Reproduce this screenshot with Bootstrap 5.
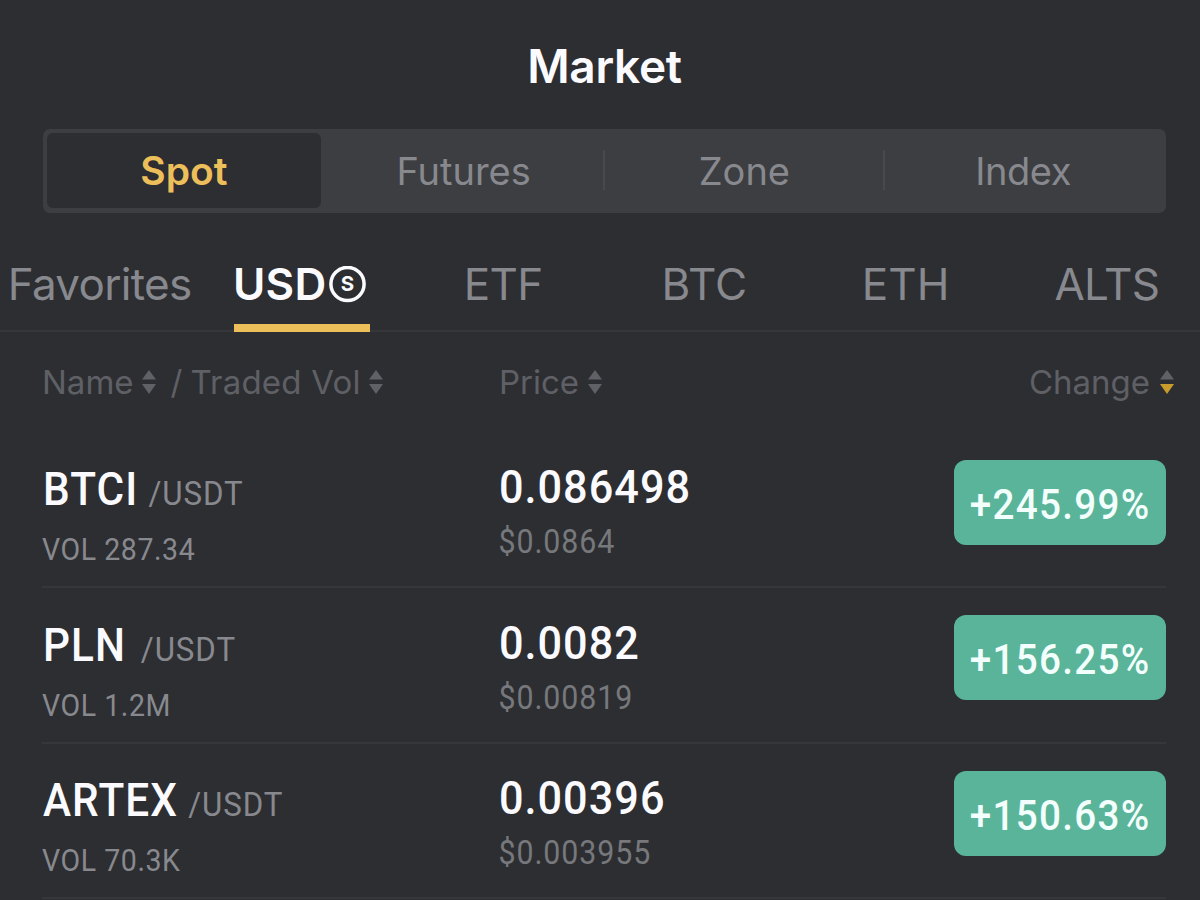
<!DOCTYPE html>
<html lang="en">
<head>
<meta charset="utf-8">
<meta name="viewport" content="width=device-width, initial-scale=1">
<title>Market</title>
<link href="https://cdn.jsdelivr.net/npm/bootstrap@5.3.0/dist/css/bootstrap.min.css" rel="stylesheet">
<style>
:root{--ink:#2d2e32;--panel:#3d3e42;--rule:#36373b;--muted:#88898e;--dim:#5f6065;--gold:#edbf5b;--up:#5ab499}
body{background:var(--ink);color:var(--muted);font-family:Inter,"Liberation Sans",sans-serif;width:1200px;height:900px}
.page-title{font-size:46px;font-weight:600;line-height:48px;letter-spacing:-.3px;color:#fbfbff;padding:42px 0 38.5px 9px}
.segments{margin:0 34px 0 43px;height:84.5px;border-radius:7px;background:var(--panel);font-size:38px}
.segments .nav-item .nav-link{position:relative;width:auto;color:var(--muted);line-height:77px;height:75px;border-radius:6px;margin:4.5px 4px 5px 3px}
.segments .nav-item .nav-link.active{background:var(--ink);color:var(--gold);font-weight:600;font-size:39px;line-height:76px;margin:4.5px 3px 5px 4px}
.segments .divided::after{content:"";position:absolute;right:-4px;top:17px;width:2px;height:40px;background:#48494d}
.coins{margin-top:31px;height:88px;border-bottom:2px solid var(--rule);font-size:44px;line-height:81px;flex-wrap:nowrap}
.coins .nav-item{flex:0 0 201.25px;height:88px}
.coins .nav-link{color:var(--muted)}
.coins .nav-link.active{width:136px;height:88px;border-bottom:8px solid var(--gold);color:#fbfbff;font-weight:600;letter-spacing:.3px}
.tight{letter-spacing:-.7px}
.snug{letter-spacing:-.4px}
.heads{height:100.5px;font-size:33px;line-height:100px;color:var(--dim)}
.first{width:456px;flex:none}
.sorter{width:14px;height:24px;fill:#606166;margin-left:10px}
.pair{margin:0 34px 0 42px;height:155.5px;border-bottom:2px solid var(--rule);font-family:Roboto,"Liberation Sans",sans-serif;white-space:nowrap}
.narrow{transform:scaleX(.92);transform-origin:0 50%}
.symbol{font-size:46px;font-weight:500;line-height:60px;letter-spacing:1.2px;color:#fbfbff;padding:26.5px 0 0 1px}
.quote{font-size:34px;font-weight:400;letter-spacing:1px;color:var(--muted);margin-left:11px}
.vol{font-size:31px;line-height:53px;letter-spacing:.6px}
.price{font-size:47px;font-weight:500;line-height:60px;letter-spacing:1.1px;color:#fbfbff;padding:24.5px 0 0 1px}
.fiat{font-size:33px;line-height:50px;letter-spacing:1px;color:#77787c;padding-left:.5px}
.change{width:212px;height:85px;margin-top:27px;border-radius:12px;background:var(--up);color:#f3fffc;font-size:42px;font-weight:500;line-height:90px;letter-spacing:1.4px}
.change .narrow{transform-origin:50% 50%;margin:0 -10px}
</style>
</head>
<body class="overflow-hidden">
<header class="text-center"><h1 class="page-title mb-0">Market</h1></header>

<ul class="nav nav-fill segments">
  <li class="nav-item w-25"><a class="nav-link active p-0">Spot</a></li>
  <li class="nav-item w-25"><a class="nav-link divided p-0">Futures</a></li>
  <li class="nav-item w-25"><a class="nav-link divided p-0">Zone</a></li>
  <li class="nav-item w-25"><a class="nav-link p-0 pe-1 snug">Index</a></li>
</ul>

<ul class="nav coins text-center">
  <li class="nav-item"><a class="nav-link p-0 tight" style="padding-right:2px!important">Favorites</a></li>
  <li class="nav-item d-flex justify-content-center"><a class="nav-link active d-flex align-items-center p-0"><span style="margin-left:-1px">USD</span><svg style="margin-left:2px" width="37" height="37" viewBox="0 0 37 37"><circle cx="18.5" cy="18" r="16.6" fill="none" stroke="#fbfbff" stroke-width="3.5"/><text x="18.5" y="25.2" text-anchor="middle" font-size="20.5" font-weight="700" letter-spacing="0" fill="#fbfbff">S</text></svg></a></li>
  <li class="nav-item"><a class="nav-link p-0 tight">ETF</a></li>
  <li class="nav-item"><a class="nav-link p-0">BTC</a></li>
  <li class="nav-item"><a class="nav-link p-0">ETH</a></li>
  <li class="nav-item"><a class="nav-link p-0 tight">ALTS</a></li>
</ul>

<svg class="d-none"><symbol id="up" viewBox="0 0 14 24"><path d="M7 0l7 9.5H0z"/></symbol><symbol id="down" viewBox="0 0 14 24"><path d="M0 14h14l-7 10z"/></symbol></svg>

<div class="heads d-flex">
  <div class="first d-flex align-items-center" style="margin-left:42px"><span>Name</span><svg class="sorter" style="margin-left:8px"><use href="#up"/><use href="#down"/></svg><span style="margin-left:15px">/</span><span style="margin-left:8px;letter-spacing:.2px">Traded Vol</span><svg class="sorter" style="margin-left:8px"><use href="#up"/><use href="#down"/></svg></div>
  <div class="d-flex align-items-center"><span style="margin-left:1px">Price</span><svg class="sorter" style="margin-left:9px"><use href="#up"/><use href="#down"/></svg></div>
  <div class="ms-auto d-flex align-items-center" style="margin-right:26px"><span>Change</span><svg class="sorter"><use href="#up"/><use href="#down" fill="#c99b2c"/></svg></div>
</div>

<main>
  <section class="pair d-flex">
    <div class="first"><div class="symbol narrow">BTCI<span class="quote">/USDT</span></div><div class="vol narrow">VOL 287.34</div></div>
    <div><div class="price narrow">0.086498</div><div class="fiat narrow">$0.0864</div></div>
    <div class="change ms-auto text-center"><span class="narrow d-inline-block">+245.99%</span></div>
  </section>
  <section class="pair d-flex">
    <div class="first"><div class="symbol narrow">PLN<span class="quote ms-3">/USDT</span></div><div class="vol narrow">VOL 1.2M</div></div>
    <div><div class="price narrow">0.0082</div><div class="fiat narrow">$0.00819</div></div>
    <div class="change ms-auto text-center"><span class="narrow d-inline-block">+156.25%</span></div>
  </section>
  <section class="pair d-flex">
    <div class="first"><div class="symbol narrow">ARTEX<span class="quote">/USDT</span></div><div class="vol narrow">VOL 70.3K</div></div>
    <div><div class="price narrow">0.00396</div><div class="fiat narrow">$0.003955</div></div>
    <div class="change ms-auto text-center"><span class="narrow d-inline-block">+150.63%</span></div>
  </section>
</main>
<script src="https://cdn.jsdelivr.net/npm/bootstrap@5.3.0/dist/js/bootstrap.bundle.min.js"></script>
</body>
</html>
